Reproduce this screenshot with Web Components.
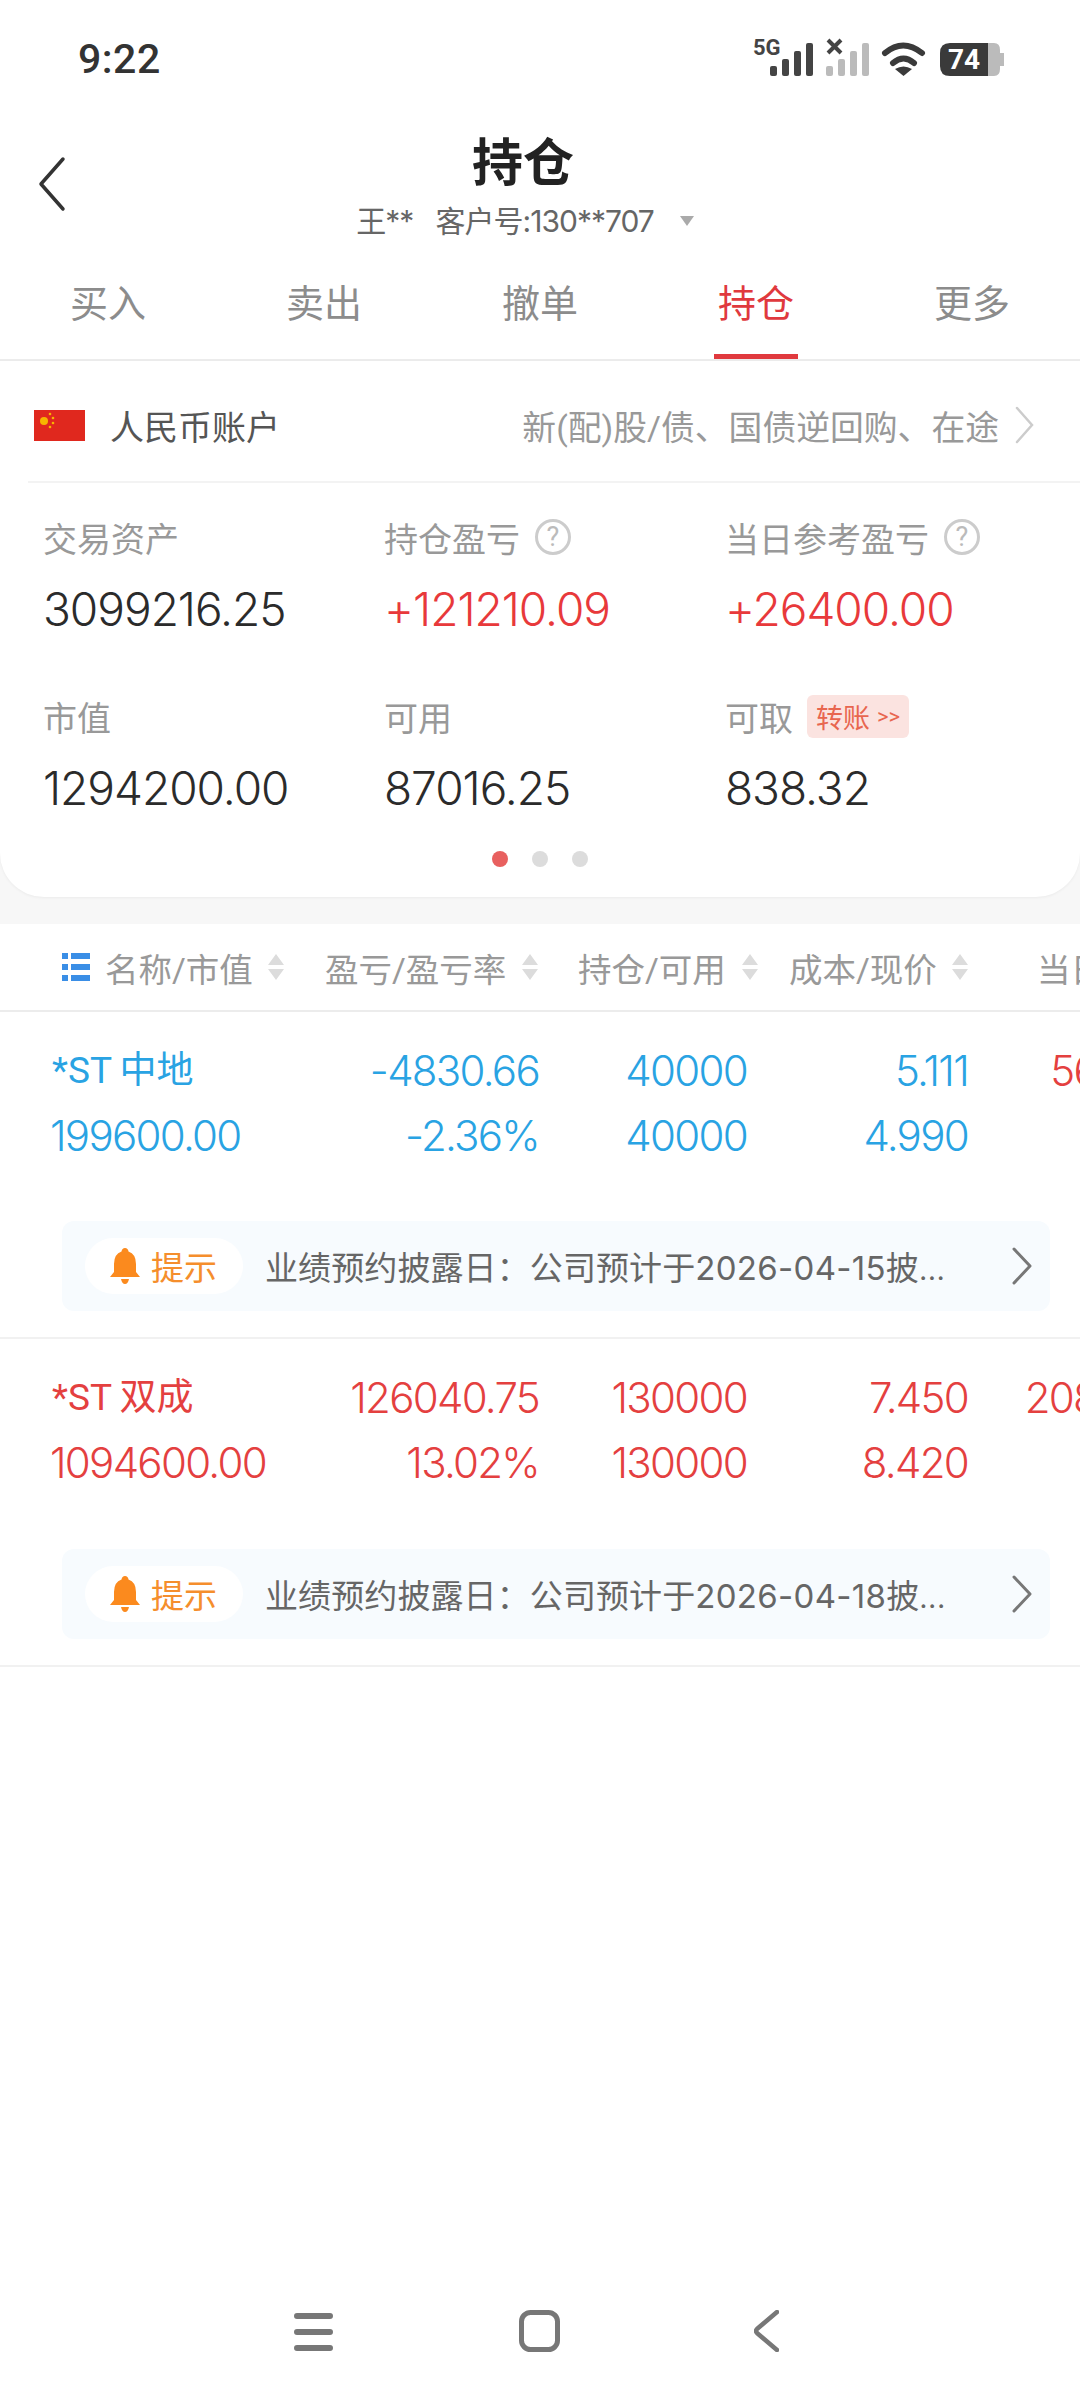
<!DOCTYPE html>
<html lang="zh">
<head>
<meta charset="utf-8">
<title>持仓</title>
<style>
  html, body { margin: 0; background: #fff; }
  body {
    width: 1080px;
    height: 2400px;
    overflow: hidden;
    display: flex;
    flex-direction: column;
    font-family: Roboto, "Noto Sans CJK SC", sans-serif;
  }
</style>
</head>
<body>
  <status-bar></status-bar>
  <page-header title="持仓" sub="王**&nbsp;&nbsp;&nbsp;客户号:130**707"></page-header>
  <tab-bar>
    <tab-item>买入</tab-item>
    <tab-item>卖出</tab-item>
    <tab-item>撤单</tab-item>
    <tab-item active>持仓</tab-item>
    <tab-item>更多</tab-item>
  </tab-bar>
  <summary-card>
    <stat-cell label="交易资产" value="3099216.25"></stat-cell>
    <stat-cell label="持仓盈亏" value="+121210.09" help tone="red"></stat-cell>
    <stat-cell label="当日参考盈亏" value="+26400.00" help tone="red"></stat-cell>
    <stat-cell label="市值" value="1294200.00"></stat-cell>
    <stat-cell label="可用" value="87016.25"></stat-cell>
    <stat-cell label="可取" value="838.32" transfer></stat-cell>
  </summary-card>
  <table-head>
    <sort-head style="width:179px">名称/市值</sort-head>
    <sort-head style="width:213px;margin-left:41px">盈亏/盈亏率</sort-head>
    <sort-head style="width:180px;margin-left:40px">持仓/可用</sort-head>
    <sort-head style="width:179px;margin-left:31px">成本/现价</sort-head>
    <sort-head style="width:200px;margin-left:69px">当日盈亏</sort-head>
  </table-head>
  <stock-row tone="blue">
    <span class="name">*ST&#8201;中地</span><span>-4830.66</span><span>40000</span><span>5.111</span><span class="up">5600.00</span>
    <span>199600.00</span><span>-2.36%</span><span>40000</span><span>4.990</span><span></span>
    <notice-strip slot="notice">业绩预约披露日：公司预计于<span class="date">2026-04-15</span>披...</notice-strip>
  </stock-row>
  <stock-row tone="red">
    <span class="name">*ST&#8201;双成</span><span>126040.75</span><span>130000</span><span>7.450</span><span class="up">20800.00</span>
    <span>1094600.00</span><span>13.02%</span><span>130000</span><span>8.420</span><span></span>
    <notice-strip slot="notice">业绩预约披露日：公司预计于<span class="date">2026-04-18</span>披...</notice-strip>
  </stock-row>
  <system-nav></system-nav>

<script>
const define = (name, cls) => window.customElements.define(name, cls)

// shared base, every element just hands over its shadow markup
class Shadowed extends HTMLElement {
  constructor() {
    super()
    this.attachShadow({ mode: "open" })
  }
  connectedCallback() {
    this.shadowRoot.innerHTML = this.render()
  }
}

define('status-bar', class extends Shadowed {
  render() {
    return `
      <style>
        :host { display: flex; align-items: center; justify-content: space-between; height: 118px; box-sizing: border-box; padding: 0 76px 0 78px; }
        .time { font-size: 41px; font-weight: 500; color: #333; letter-spacing: .5px; }
        svg { display: block; margin-top: 0; }
        text { font-family: Roboto, sans-serif; }
      </style>
      <span class="time">9:22</span>
      <svg width="254" height="44" viewBox="750 36 254 44">
        <text x="753" y="54" font-size="22" font-weight="700" fill="#444">5G</text>
        <g fill="#444">
          <rect x="770" y="65" width="7" height="10" rx="2"/><rect x="782" y="58" width="7" height="17" rx="2"/>
          <rect x="794" y="50" width="7" height="25" rx="2"/><rect x="806" y="42" width="7" height="33" rx="2"/>
        </g>
        <path d="M828 39l13 13M841 39l-13 13" stroke="#444" stroke-width="4" fill="none"/>
        <g fill="#bbb">
          <rect x="826" y="65" width="7" height="10" rx="2"/><rect x="838" y="58" width="7" height="17" rx="2"/>
          <rect x="850" y="50" width="7" height="25" rx="2"/><rect x="862" y="42" width="7" height="33" rx="2"/>
        </g>
        <g fill="none" stroke="#3a3a3a" stroke-width="6" stroke-linecap="round">
          <path d="M885 52q18-15 37 0"/><path d="M893 62q10.500-9 21 0"/>
        </g>
        <path d="M903.500 75l-8.500-7q8.500-5 17 0z" fill="#3a3a3a"/>
        <path d="M988 42h6q6 0 6 7v3h4v13h-4v3q0 7-6 7h-6z" fill="#bbb"/>
        <path d="M988 42h-38q-10 0-10 10v13q0 10 10 10h38z" fill="#3a3a3a"/>
        <text x="964" y="68" font-size="28" font-weight="700" fill="#fff" text-anchor="middle">74</text>
      </svg>`
  }
})

define('page-header', class extends Shadowed {
  render() {
    return `
      <style>
        :host { display: block; position: relative; height: 124px; text-align: center; box-sizing: border-box; padding-top: 13px; }
        .title { font-size: 51px; line-height: 66px; font-weight: 700; color: #222; margin-right: 34px; }
        .sub { display: flex; justify-content: center; align-items: center; gap: 26px; font-family: Inter, "Noto Sans CJK SC", sans-serif; font-size: 30px; letter-spacing: -1px; line-height: 40px; color: #666; margin-top: 4px; margin-right: 30px; }
        .caret { width: 0; height: 0; border: 7px solid transparent; border-top: 10px solid #aaa; border-bottom: 0; }
        .back { position: absolute; left: 38px; top: 38px; }
      </style>
      <svg class="back" width="28" height="56" viewBox="0 0 28 56"><path d="M25 3L3 28l22 25" fill="none" stroke="#333" stroke-width="3.500" stroke-linecap="round" stroke-linejoin="round"/></svg>
      <div class="title">${this.getAttribute('title')}</div>
      <div class="sub"><span>${this.getAttribute('sub')}</span><i class="caret"></i></div>`
  }
})

define('tab-bar', class extends Shadowed {
  render() {
    return `
      <style>
        :host { display: grid; grid-template-columns: repeat(5, 216px); height: 119px; box-sizing: border-box; border-bottom: 2px solid #ececec; }
      </style>
      <slot></slot>`
  }
})

define('tab-item', class extends Shadowed {
  render() {
    return `
      <style>
        :host { display: flex; justify-content: center; position: relative; box-sizing: border-box; padding-top: 23px; font-size: 38px; line-height: 78px; color: #8c8c8c; }
        :host([active]) { color: #e0393e; }
        :host([active]) i { position: absolute; left: 66px; width: 84px; bottom: 0; height: 5px; background: #e0393e; }
      </style>
      <slot></slot><i></i>`
  }
})

define('summary-card', class extends Shadowed {
  render() {
    return `
      <style>
        :host { display: block; background: #f7f7f7; padding-bottom: 27px; }
        .card { height: 536px; box-sizing: border-box; border-radius: 0 0 44px 44px; box-shadow: 0 1px 3px rgba(0,0,0,.05); background: #fff; }
        .account { display: flex; align-items: center; height: 122px; margin-left: 28px; box-sizing: border-box; border-bottom: 2px solid #f3f3f3; padding: 8px 45px 0 6px; font-size: 34px; }
        .flag { margin-right: 25px; }
        .name { color: #555; flex: 1; }
        .note { color: #999; font-size: 33.800px; }
        .next { margin-left: 16px; }
        .stats { display: grid; grid-template-columns: repeat(3, 341px); grid-auto-rows: 123px; row-gap: 56px; padding: 31px 0 0 43px; }
        .dots { display: flex; justify-content: center; gap: 24px; margin-top: 35px; }
        .dots i { width: 16px; height: 16px; border-radius: 50%; background: #dcdcdc; }
        .dots i:first-child { background: #e8605f; }
      </style>
      <div class="card">
        <div class="account">
          <svg class="flag" width="51" height="31" viewBox="0 0 51 31">
            <rect width="51" height="31" fill="#e0281e"/>
            <circle cx="10" cy="11" r="4" fill="#f7b500"/>
            <g fill="#f7b500"><circle cx="16" cy="4" r="1.300"/><circle cx="19" cy="8" r="1.300"/><circle cx="19" cy="13" r="1.300"/><circle cx="16" cy="17" r="1.300"/></g>
          </svg>
          <span class="name">人民币账户</span>
          <span class="note">新(配)股/债、国债逆回购、在途</span>
          <svg class="next" width="20" height="38" viewBox="0 0 20 38"><path d="M2 2l15 17L2 36" fill="none" stroke="#ccc" stroke-width="2.500" stroke-linecap="round"/></svg>
        </div>
        <div class="stats"><slot></slot></div>
        <div class="dots"><i></i><i></i><i></i></div>
      </div>`
  }
})

define('stat-cell', class extends Shadowed {
  render() {
    const help = this.hasAttribute('help') ? '<span class="help">?</span>' : ''
    const move = this.hasAttribute('transfer') ? '<span class="move">转账<small>&gt;&gt;</small></span>' : ''
    return `
      <style>
        :host { display: block; }
        .label { display: flex; align-items: center; height: 46px; font-size: 34px; color: #999; }
        .help { box-sizing: border-box; width: 36px; height: 36px; margin-left: 15px; border: 3px solid #ccc; border-radius: 50%; color: #bbb; font-size: 27px; line-height: 30px; text-align: center; }
        .move { display: flex; align-items: center; gap: 7px; height: 43px; margin-left: 14px; padding: 0 9px; background: #fbe3e0; border-radius: 6px; color: #e8664f; font-size: 27px; }
        small { font-size: 22px; }
        .value { margin-top: 19px; font-family: Inter, Roboto, sans-serif; font-weight: 350; font-size: 46px; letter-spacing: -1px; line-height: 60px; color: #2b2b2b; }
        :host([tone=red]) .value { color: #e8393b; }
      </style>
      <div class="label">${this.getAttribute('label')}${help}${move}</div>
      <div class="value">${this.getAttribute('value')}</div>`
  }
})

define('table-head', class extends Shadowed {
  render() {
    return `
      <style>
        :host { display: flex; align-items: center; height: 86px; padding-left: 62px; border-bottom: 2px solid #ececec; overflow: hidden; white-space: nowrap; background: #fff; }
        svg { flex: none; margin-right: 15px; }
      </style>
      <svg width="28" height="28" viewBox="0 0 28 28" fill="#3a8ee6">
        <rect width="6" height="6" y="0"/><rect x="9" width="19" height="6" y="0"/>
        <rect width="6" height="6" y="11"/><rect x="9" width="19" height="6" y="11"/>
        <rect width="6" height="6" y="22"/><rect x="9" width="19" height="6" y="22"/>
      </svg>
      <slot></slot>`
  }
})

define('sort-head', class extends Shadowed {
  render() {
    return `
      <style>
        :host { display: flex; flex: none; align-items: center; justify-content: space-between; font-size: 33.500px; color: #999; }
        .sort { flex: none; display: block; }
      </style>
      <slot></slot>
      <svg class="sort" width="16" height="26" viewBox="0 0 16 26" fill="#dcdcdc"><path d="M8 0l8 11H0zM8 26L0 15h16z"/></svg>`
  }
})

define('stock-row', class extends Shadowed {
  render() {
    return `
      <style>
        :host { display: block; height: 327px; box-sizing: border-box; border-bottom: 2px solid #f1f1f1; overflow: hidden; --tone: #29a3e3; }
        :host([tone=red]) { --tone: #e4403f; height: 328px; }
        .cells { display: grid; grid-template-columns: 280px 209px 208px 221px 234px; grid-auto-rows: 65px; padding: 26px 0 0 50px; width: 1200px; font-family: Inter, Roboto, sans-serif; font-weight: 350; font-size: 42px; letter-spacing: -1.700px; line-height: 65px; color: var(--tone); white-space: nowrap; }
        ::slotted(span) { text-align: right; }
        ::slotted(.up) { color: #e4403f; }
        ::slotted(span:nth-of-type(1)), ::slotted(span:nth-of-type(6)) { text-align: left; }
        ::slotted(.name) { font-family: Roboto, "Noto Sans CJK SC", sans-serif; font-weight: 400; font-size: 37px; letter-spacing: 0; margin-left: 2px; }
        .foot { padding: 53px 30px 0 62px; }
        :host([tone=red]) .foot { padding-top: 54px; }
      </style>
      <div class="cells"><slot></slot></div>
      <div class="foot"><slot name="notice"></slot></div>`
  }
})

define('notice-strip', class extends Shadowed {
  render() {
    return `
      <style>
        :host { display: flex; align-items: center; height: 90px; box-sizing: border-box; padding: 0 18px 0 23px; background: #f7fbfe; border-radius: 12px; font-size: 33px; color: #666; white-space: nowrap; }
        .tip { display: flex; align-items: center; gap: 11px; width: 158px; height: 56px; box-sizing: border-box; padding-left: 25px; margin-right: 22px; background: #fff; border-radius: 28px; color: #f58e2c; flex: none; }
        .text { flex: 1; letter-spacing: .1px; }
        ::slotted(.date) { font-family: Inter, Roboto, sans-serif; letter-spacing: .3px; }
      </style>
      <span class="tip">
        <svg width="30" height="36" viewBox="0 0 30 36" fill="#fb8a1e"><path d="M15 0q3 0 3.500 3.500Q26 6 26 16v8l4 5H0l4-5v-8Q4 6 11.500 3.500 12 0 15 0z"/><path d="M11 31h8q-1 5-4 5t-4-5z"/></svg>
        提示
      </span>
      <span class="text"><slot></slot></span>
      <svg width="20" height="38" viewBox="0 0 20 38"><path d="M2 2l16 17L2 36" fill="none" stroke="#777" stroke-width="3" stroke-linecap="round" stroke-linejoin="round"/></svg>`
  }
})

define('system-nav', class extends Shadowed {
  render() {
    return `
      <style>
        :host { display: flex; margin-top: auto; height: 42px; padding: 0 0 48px 294px; box-sizing: content-box; }
        .home { margin-left: 186px; }
        .back { margin-left: 194px; }
      </style>
      <svg width="39" height="42" viewBox="0 0 39 42"><path d="M3 6h33M3 22h33M3 38h33" stroke="#777" stroke-width="6" stroke-linecap="round"/></svg>
      <svg class="home" width="41" height="42" viewBox="0 0 41 42"><rect x="2.500" y="2.500" width="36" height="37" rx="9" fill="none" stroke="#777" stroke-width="5"/></svg>
      <svg class="back" width="25" height="42" viewBox="0 0 25 42"><path d="M23 2L3 19q-2 2 0 4l20 17" fill="none" stroke="#777" stroke-width="4.500" stroke-linecap="round"/></svg>`
  }
})
</script>
</body>
</html>
